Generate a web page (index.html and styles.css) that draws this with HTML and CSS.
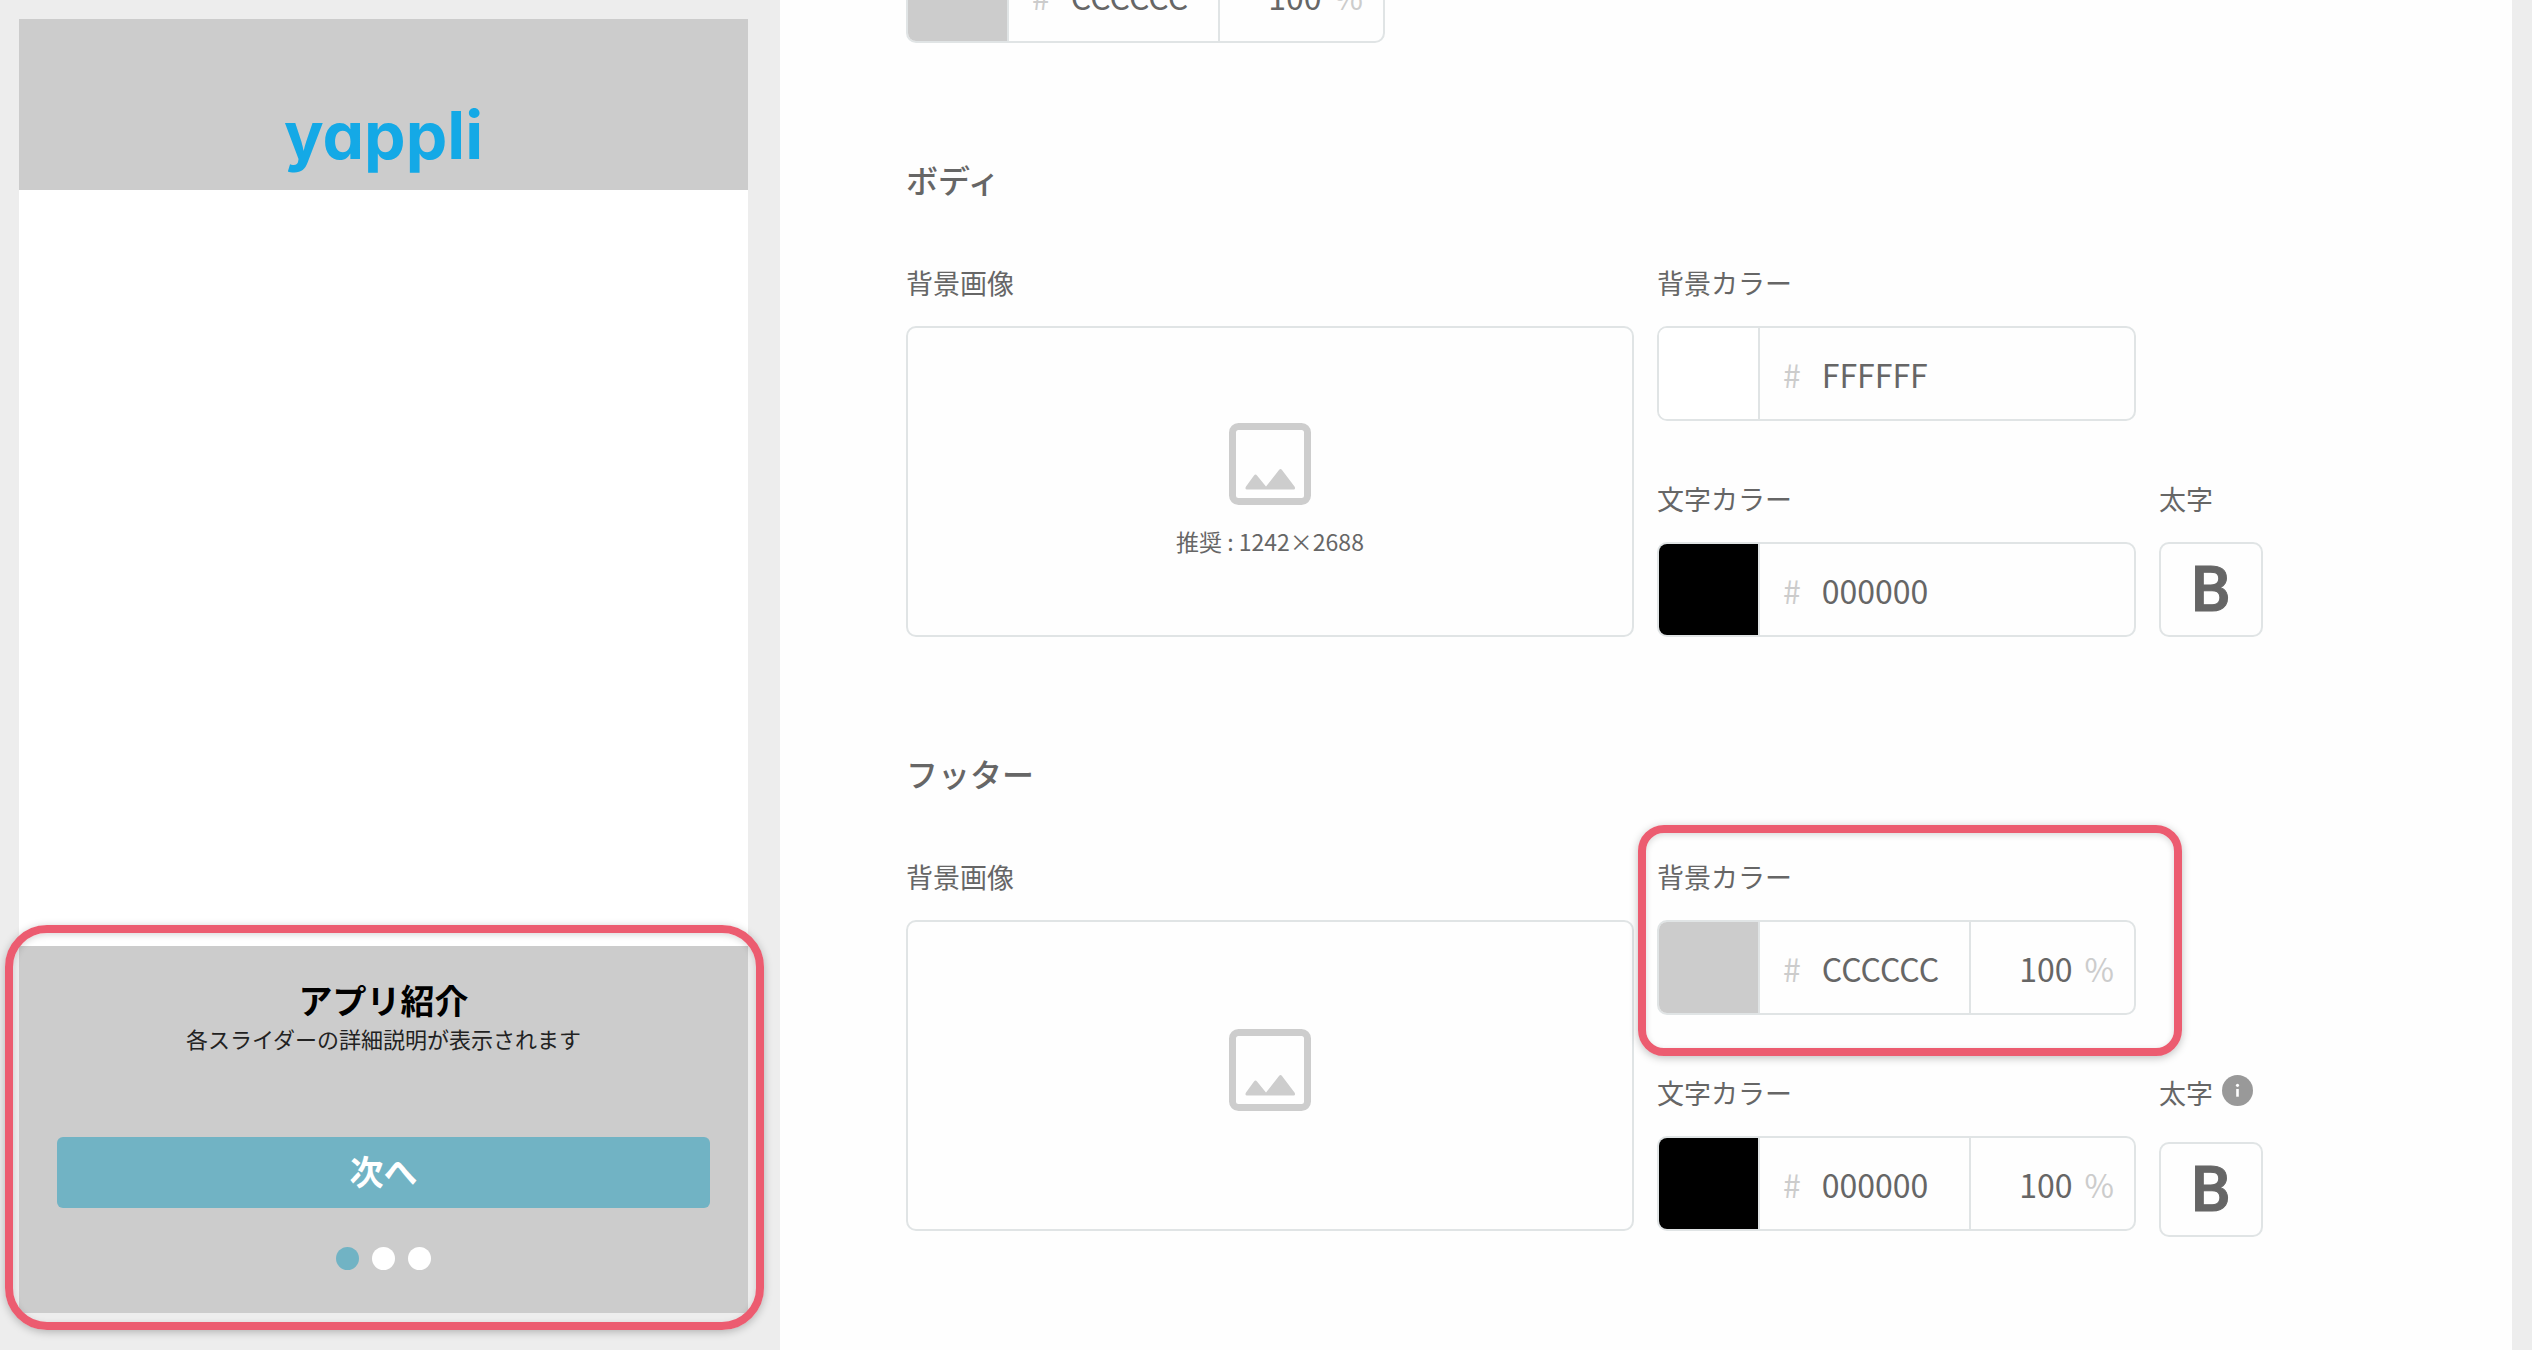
FILE: index.html
```html
<!DOCTYPE html>
<html lang="ja">
<head>
<meta charset="utf-8">
<meta name="viewport" content="width=device-width, initial-scale=1">
<title>スライダー デザイン設定</title>
<link rel="stylesheet" href="styles.css">
</head>
<body>
<svg class="defs" aria-hidden="true">
  <symbol id="icon-image" viewBox="0 0 82 82">
    <rect x="3.5" y="3.5" width="75" height="75" rx="6" fill="none" stroke="currentColor" stroke-width="7"/>
    <path d="M18 66.500Q15.500 66.500 17 63.500L25 52.500Q26.500 50.500 28 52.500L37 63.500 50 47Q51.500 45.200 53 47L65.500 63.500Q67 66.500 64.500 66.500Z" fill="currentColor"/>
  </symbol>
</svg>
<div class="page">
  <aside class="preview">
    <div class="phone">
      <header class="phone-header"><span class="logo">yappli</span></header>
      <div class="phone-body"></div>
      <footer class="phone-footer">
        <h2 class="slide-title">アプリ紹介</h2>
        <p class="slide-text">各スライダーの詳細説明が表示されます</p>
        <button class="next" type="button">次へ</button>
        <div class="dots"><span class="dot dot-current"></span><span class="dot"></span><span class="dot"></span></div>
        <div class="highlight highlight-preview"></div>
      </footer>
    </div>
  </aside>

  <main class="settings">
    <div class="picker">
      <input class="swatch" type="color" value="#cccccc" aria-label="ヘッダー背景カラー">
      <label class="hex"><span class="unit">#</span><input class="value" type="text" value="CCCCCC"></label>
      <label class="alpha"><input class="value" type="text" value="100"><span class="unit">%</span></label>
    </div>

    <section class="section">
      <h2 class="heading">ボディ</h2>
      <div class="columns">
        <div class="group">
          <div class="label-row" id="body-image">背景画像</div>
          <button class="image-box image-box-sized" type="button" aria-labelledby="body-image">
            <svg class="image-icon"><use href="#icon-image"/></svg>
            <span class="size-hint">推奨 : 1242×2688</span>
          </button>
        </div>
        <div class="fields">
          <div class="group">
            <label class="label-row" for="body-bg">背景カラー</label>
            <div class="picker">
              <input class="swatch" type="color" value="#ffffff" aria-label="背景カラー">
              <label class="hex"><span class="unit">#</span><input class="value" id="body-bg" type="text" value="FFFFFF"></label>
            </div>
          </div>
          <div class="text-row">
            <div class="group">
              <label class="label-row" for="body-text">文字カラー</label>
              <div class="picker">
                <input class="swatch" type="color" value="#000000" aria-label="文字カラー">
                <label class="hex"><span class="unit">#</span><input class="value" id="body-text" type="text" value="000000"></label>
              </div>
            </div>
            <div class="group bold-group">
              <label class="label-row" for="body-bold">太字</label>
              <button class="bold" id="body-bold" type="button">B</button>
            </div>
          </div>
        </div>
      </div>
    </section>

    <section class="section">
      <h2 class="heading">フッター</h2>
      <div class="columns">
        <div class="group">
          <div class="label-row" id="footer-image">背景画像</div>
          <button class="image-box" type="button" aria-labelledby="footer-image">
            <svg class="image-icon"><use href="#icon-image"/></svg>
          </button>
        </div>
        <div class="fields">
          <div class="group picker-group">
            <label class="label-row" for="footer-bg">背景カラー</label>
            <div class="picker">
              <input class="swatch" type="color" value="#cccccc" aria-label="背景カラー">
              <label class="hex"><span class="unit">#</span><input class="value" id="footer-bg" type="text" value="CCCCCC"></label>
              <label class="alpha"><input class="value" type="text" value="100"><span class="unit">%</span></label>
            </div>
            <div class="highlight highlight-field"></div>
          </div>
          <div class="text-row">
            <div class="group">
              <label class="label-row" for="footer-text">文字カラー</label>
              <div class="picker">
                <input class="swatch" type="color" value="#000000" aria-label="文字カラー">
                <label class="hex"><span class="unit">#</span><input class="value" id="footer-text" type="text" value="000000"></label>
                <label class="alpha"><input class="value" type="text" value="100"><span class="unit">%</span></label>
              </div>
            </div>
            <div class="group bold-group">
              <label class="label-row label-row-info" for="footer-bold">太字
                <svg class="info" viewBox="0 0 30 30"><circle cx="15" cy="15" r="15" fill="#999"/><circle cx="15" cy="10" r="1.500" fill="#fff"/><path d="M15 13.500V21" stroke="#fff" stroke-width="2.500"/></svg>
              </label>
              <button class="bold" id="footer-bold" type="button">B</button>
            </div>
          </div>
        </div>
      </div>
    </section>
  </main>
  <div class="gutter"></div>
</div>
</body>
</html>
```
FILE: styles.css
```css
* { box-sizing: border-box; }

body {
  margin: 0;
  background: #fefefe;
  color: #666;
  font-family: "Noto Sans CJK JP", "Noto Sans", sans-serif;
}

h2, p { margin: 0; }

button, input { font: inherit; color: inherit; padding: 0; margin: 0; }

.defs { display: none; }

.page {
  display: grid;
  grid-template-columns: minmax(0, 780fr) minmax(0, 1732fr) 20px;
  min-height: 100vh;
  overflow: hidden;
}

.gutter { background: #ededed; }

/* App preview */

.preview {
  display: flex;
  padding: 19px 32px 37px 19px;
  background: #ededed;
}

.phone {
  display: flex;
  flex: 1;
  flex-direction: column;
  background: #fff;
}

.phone-header {
  display: flex;
  justify-content: center;
  align-items: flex-end;
  height: 171px;
  padding-bottom: 15px;
  background: #ccc;
}

.logo {
  color: #14a9e6;
  font-family: Inter, sans-serif;
  font-feature-settings: "cv11";
  font-size: 66px;
  font-weight: 700;
  line-height: 80px;
}

.phone-body { flex: 1; }

.phone-footer {
  position: relative;
  display: flex;
  flex-direction: column;
  padding: 32px 38px 43px;
  background: #ccc;
  color: #000;
  text-align: center;
}

.slide-title {
  font-size: 34px;
  font-weight: 700;
  line-height: 44px;
}

.slide-text {
  color: #222;
  font-size: 22px;
  line-height: 32px;
}

.next {
  height: 71px;
  margin: 83px 0 39px;
  padding-bottom: 4px;
  border: 0;
  border-radius: 6px;
  background: #71b3c4;
  color: #fff;
  font-size: 34px;
  font-weight: 700;
}

.dots {
  display: flex;
  justify-content: center;
  gap: 13px;
}

.dot {
  width: 23px;
  height: 23px;
  border-radius: 50%;
  background: #fff;
}

.dot-current { background: #71b3c4; }

/* Callout frames */

.highlight {
  position: absolute;
  border: 8px solid #ec5c70;
  box-shadow: 0 2px 8px rgba(0, 0, 0, .25), inset 0 2px 6px rgba(0, 0, 0, .15);
  pointer-events: none;
}

.highlight-preview {
  inset: -21px -16px -17px -14px;
  border-radius: 42px;
}

.highlight-field {
  inset: -32px -46px -41px -19px;
  border-radius: 26px;
}

/* Settings form, scrolled so that the header section is partly out of view */

.settings {
  display: flex;
  flex-direction: column;
  gap: 112px;
  margin-top: -52px;
  padding: 0 126px 112px;
}

.heading {
  margin-bottom: 60px;
  font-size: 32px;
  font-weight: 500;
  line-height: 48px;
}

.columns {
  display: grid;
  grid-template-columns: minmax(0, 728px) auto;
  justify-content: start;
  gap: 23px;
}

.fields {
  display: flex;
  flex-direction: column;
  gap: 58px;
}

.text-row {
  display: flex;
  gap: 23px;
}

.picker-group {
  position: relative;
  width: 479px;
}

.label-row {
  display: block;
  margin-bottom: 23px;
  font-size: 27px;
  line-height: 40px;
}

.label-row-info {
  display: flex;
  gap: 9px;
  height: 46px;
}

.info {
  width: 31px;
  height: 31px;
  margin-top: 2px;
}

.image-box {
  display: flex;
  flex-direction: column;
  align-items: center;
  width: 100%;
  height: 311px;
  padding-top: 107px;
  border: 2px solid #e0e4e5;
  border-radius: 10px;
  background: #fefefe;
}

.image-box-sized { padding-top: 95px; }

.image-icon {
  width: 82px;
  height: 82px;
  color: #cdcdcd;
}

.size-hint {
  margin-top: 18px;
  font-size: 23px;
  line-height: 36px;
}

.picker {
  display: flex;
  width: 479px;
  height: 95px;
  overflow: hidden;
  border: 2px solid #e0e4e5;
  border-radius: 10px;
  background: #fefefe;
}

.swatch {
  width: 101px;
  height: 100%;
  border: 0;
  border-right: 2px solid #e0e4e5;
  background: none;
}

.swatch::-webkit-color-swatch-wrapper { padding: 0; }

.swatch::-webkit-color-swatch {
  border: 0;
  border-radius: 0;
}

.hex, .alpha {
  display: flex;
  align-items: center;
  font-size: 32px;
}

.hex {
  flex: 1;
  gap: 21px;
  min-width: 0;
  padding-left: 23px;
}

.alpha {
  gap: 12px;
  width: 165px;
  padding-right: 20px;
  border-left: 2px solid #e0e4e5;
}

.value {
  flex: 1;
  min-width: 0;
  border: 0;
  background: none;
}

.alpha .value { text-align: right; }

.unit { color: #ccc; }

.bold {
  display: flex;
  align-items: center;
  justify-content: center;
  width: 104px;
  height: 95px;
  border: 2px solid #e0e4e5;
  border-radius: 10px;
  background: #fefefe;
  font-family: Roboto, sans-serif;
  font-size: 63px;
  font-weight: 500;
  line-height: 80px;
  -webkit-text-stroke: 1px #666;
}
```
